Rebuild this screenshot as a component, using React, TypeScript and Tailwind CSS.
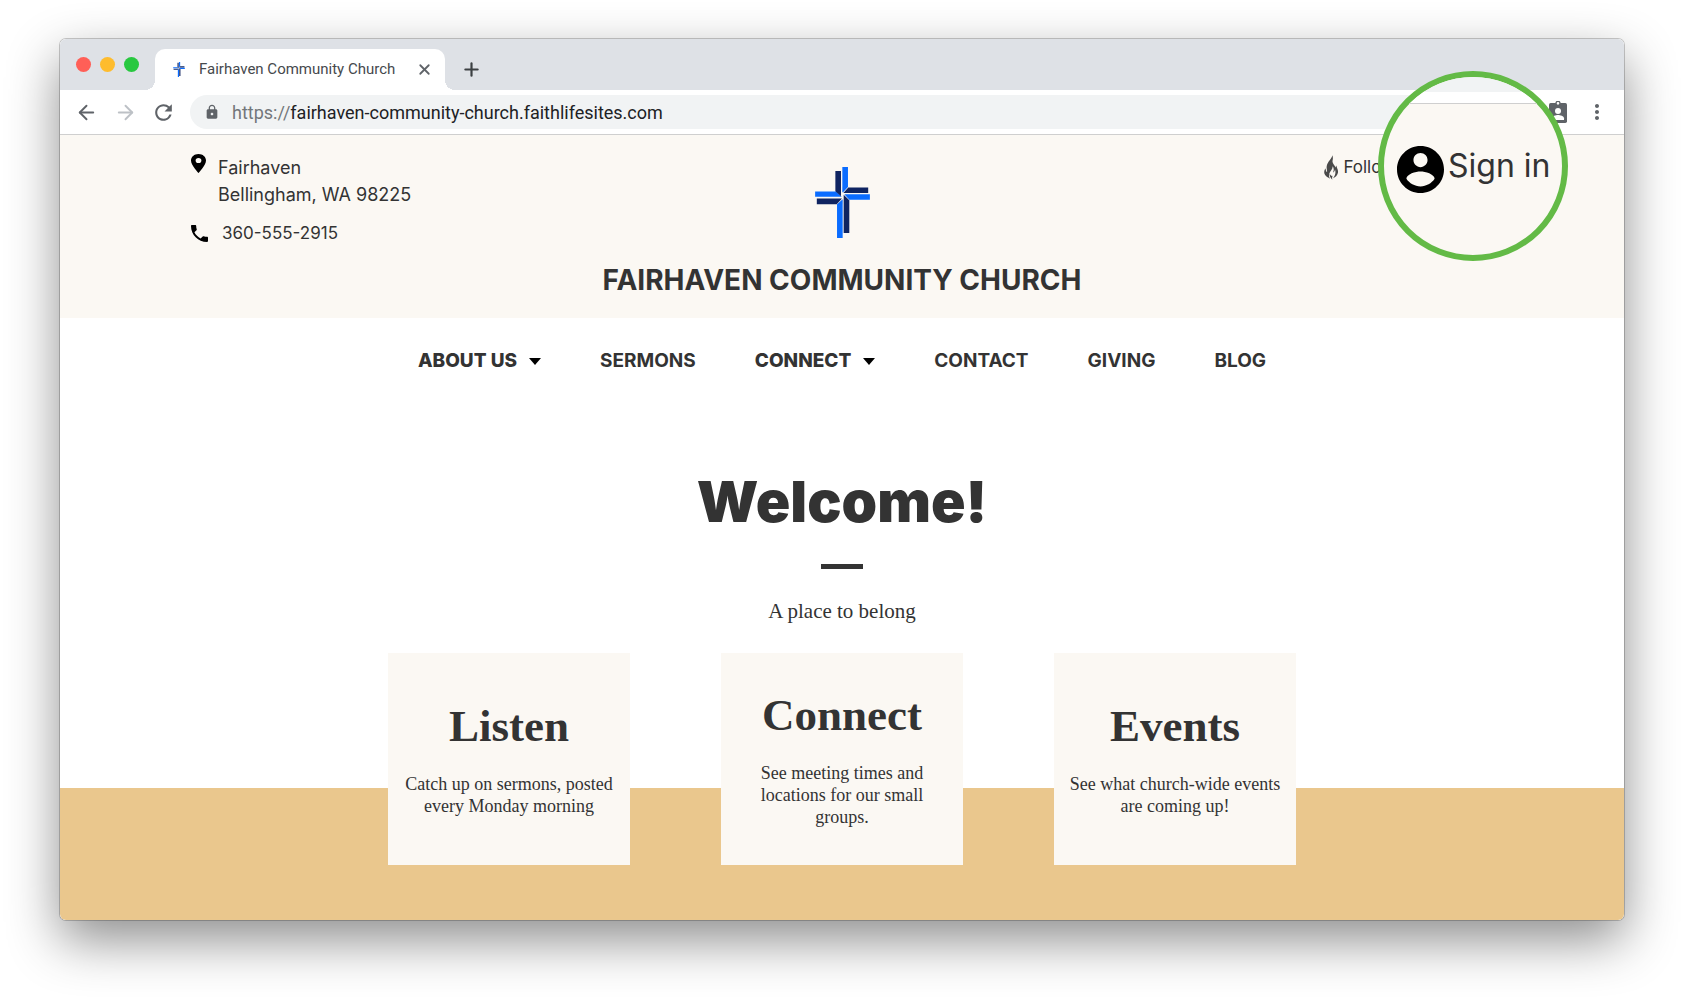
import { ArrowLeft, ArrowRight, Plus, X } from 'lucide-react';
import { MdLock, MdMoreVert, MdRefresh } from 'react-icons/md';

interface NavItem {
  name: string;
  href: string;
  hasMenu?: boolean;
}

const navItems: NavItem[] = [
  { name: 'ABOUT US', href: '#about', hasMenu: true },
  { name: 'SERMONS', href: '#sermons' },
  { name: 'CONNECT', href: '#connect', hasMenu: true },
  { name: 'CONTACT', href: '#contact' },
  { name: 'GIVING', href: '#giving' },
  { name: 'BLOG', href: '#blog' },
];

const cards = [
  { title: 'Listen', text: 'Catch up on sermons, posted every Monday morning' },
  { title: 'Connect', text: 'See meeting times and locations for our small groups.' },
  { title: 'Events', text: 'See what church-wide events are coming up!' },
];

function CrossLogo({ className }: { className: string }) {
  return (
    <svg viewBox="0 0 165 214" className={className} aria-hidden="true">
      <g fill="#0a6cff">
        <path d="M82 0h17v60L84 76h-2z" />
        <path d="M0 74h63l17 16H0z" />
        <path d="M66 112l17-15v117H66z" />
        <path d="M88 82h77v17h-62z" />
      </g>
      <g fill="#0f2461">
        <path d="M61 12h17v76L61 73z" />
        <path d="M100 62h60v16H85z" />
        <path d="M5 95h76l-16 17H5z" />
        <path d="M86 84l17 16v99H86z" />
      </g>
    </svg>
  );
}

function PinIcon() {
  return (
    <svg viewBox="5 2 14 20" className="h-[19px] w-[15px]" preserveAspectRatio="none" aria-hidden="true">
      <path d="M12 2C8 2 5 5 5 8.800c0 5 7 13.200 7 13.200s7-8.200 7-13.200C19 5 16 2 12 2zm0 9.500a2.700 2.700 0 110-5.400 2.700 2.700 0 010 5.400z" />
    </svg>
  );
}

function PhoneIcon() {
  return (
    <svg viewBox="3 3 18 18" className="size-[17px]" aria-hidden="true">
      <path d="M6.620 10.790c1.440 2.830 3.760 5.140 6.590 6.590l2.200-2.200c.27-.27.67-.36 1.020-.24 1.120.37 2.330.57 3.570.57.55 0 1 .45 1 1V20c0 .55-.45 1-1 1-9.390 0-17-7.610-17-17 0-.55.45-1 1-1h3.500c.55 0 1 .45 1 1 0 1.250.2 2.450.57 3.570.11.35.03.74-.25 1.020l-2.200 2.200z" />
    </svg>
  );
}

function FlameIcon() {
  return (
    <svg viewBox="0 0 42 74" className="h-[25px] w-[14px]" fill="#4a4a4a" aria-hidden="true">
      <path d="M25 0c-2 12-15 19-17 34-1 7 2 11 1 17-3-3-4-7-4-12C0 45-1 52 3 59c3 6 9 8 15 12-4-7-4-12-1-18 3-7 9-11 9-20 4 6 4 12 1 19 4-2 5-5 6-9 3 9 1 17-6 26 8-3 14-9 15-17 1-9-4-14-5-21-1 2-2 4-2 6-3-7-12-14-9-22 1-5 1-10-1-15z" />
      <path d="M17 55c-1 7 2 13 8 19-1-5-1-8 1-12-4 1-7-2-9-7z" />
    </svg>
  );
}

function AccountIcon() {
  return (
    <svg viewBox="2 2 20 20" className="size-[47px] shrink-0" aria-hidden="true">
      <path d="M12 2C6.480 2 2 6.480 2 12s4.480 10 10 10 10-4.480 10-10S17.520 2 12 2zm0 3c1.660 0 3 1.340 3 3s-1.340 3-3 3-3-1.340-3-3 1.340-3 3-3zm0 14.200c-2.500 0-4.710-1.280-6-3.220.030-1.990 4-3.080 6-3.080 1.990 0 5.970 1.090 6 3.080-1.290 1.940-3.500 3.220-6 3.220z" />
    </svg>
  );
}

function BadgeIcon() {
  return (
    <svg viewBox="0 0 54 66" className="h-[22px] w-[18px]" aria-hidden="true">
      <rect y="6" width="54" height="60" rx="5" fill="#5f6368" />
      <circle cx="27" cy="7" r="6" fill="#fff" stroke="#5f6368" strokeWidth="4" />
      <circle cx="27" cy="30" r="9" fill="#fff" />
      <path d="M9 57v-5c0-7 12-10 18-10s18 3 18 10v5z" fill="#fff" />
    </svg>
  );
}

function TabStrip() {
  return (
    <div className="flex h-[51px] items-end bg-[#dee1e6]">
      <div className="flex gap-[9px] self-center px-4">
        <span className="size-[15px] rounded-full bg-[#ff5f57]" />
        <span className="size-[15px] rounded-full bg-[#febc2e]" />
        <span className="size-[15px] rounded-full bg-[#28c840]" />
      </div>
      <div className="relative flex h-[41px] w-[290px] items-center rounded-t-[10px] bg-white pl-[18px] pr-3">
        {/* curved feet on both sides of the tab */}
        <span className="absolute -left-2.5 bottom-0 size-2.5 bg-[radial-gradient(circle_at_0_0,#dee1e6_10px,#fff_10px)]" />
        <span className="absolute -right-2.5 bottom-0 size-2.5 bg-[radial-gradient(circle_at_100%_0,#dee1e6_10px,#fff_10px)]" />
        <CrossLogo className="h-[15px] w-3" />
        <span className="ml-[14px] flex-1 whitespace-nowrap font-['Roboto',sans-serif] text-[15px] text-[#45494d]">
          Fairhaven Community Church
        </span>
        <button aria-label="Close tab" className="text-[#5f6368]">
          <X size={17} strokeWidth={2.5} />
        </button>
      </div>
      <button aria-label="New tab" className="mb-[10px] ml-4 text-[#3c4043]">
        <Plus size={21} strokeWidth={2.5} />
      </button>
    </div>
  );
}

function Toolbar() {
  return (
    <div className="flex h-[45px] items-center border-b border-[#cfcfcf] bg-white pl-[15px] pr-[15px]">
      <button aria-label="Back" className="text-[#5f6368]">
        <ArrowLeft size={23} />
      </button>
      <button aria-label="Forward" className="ml-4 text-[#bdc1c6]">
        <ArrowRight size={23} />
      </button>
      <button aria-label="Reload" className="ml-[14px] text-[#5f6368]">
        <MdRefresh size={25} />
      </button>
      <div className="ml-[14px] flex h-[34px] flex-1 items-center rounded-full bg-[#f1f3f4] pl-[14px]">
        <MdLock size={16} className="text-[#5f6368]" />
        <span className="ml-3 font-['Roboto',sans-serif] text-[18px] text-[#202124]">
          <span className="text-[#73777b]">https://</span>fairhaven-community-church.faithlifesites.com
        </span>
      </div>
      <button aria-label="Profile" className="ml-10">
        <BadgeIcon />
      </button>
      <button aria-label="More options" className="ml-[18px] text-[#5f6368]">
        <MdMoreVert size={24} />
      </button>
    </div>
  );
}

function SiteHeader() {
  return (
    <header className="grid h-[183px] grid-cols-[1fr_auto_1fr] bg-[#fbf8f3] px-[131px] text-[17px] leading-[27px] text-[#333]">
      <address className="pt-[19px] not-italic">
        <div className="flex gap-3">
          <PinIcon />
          <p className="text-[18px]">
            Fairhaven
            <br />
            Bellingham, WA 98225
          </p>
        </div>
        <a href="tel:3605552915" className="mt-3 flex items-center gap-[14px]">
          <PhoneIcon />
          360-555-2915
        </a>
      </address>
      <div className="flex flex-col items-center pt-8">
        <CrossLogo className="h-[71px] w-[55px]" />
        <h1 className="mt-6 whitespace-nowrap text-[28px] font-bold leading-9">FAIRHAVEN COMMUNITY CHURCH</h1>
      </div>
      <div className="flex items-start justify-end pr-[98px] pt-[19px]">
        <a href="#follow" className="flex items-center gap-[5px]">
          <FlameIcon />
          Follow
        </a>
      </div>
    </header>
  );
}

function SiteNav() {
  return (
    <nav className="flex h-[86px] items-center justify-center gap-[59px]">
      {navItems.map((item) => (
        <a
          key={item.name}
          href={item.href}
          className={`flex items-center gap-3 text-[19px] text-[#333] ${item.hasMenu ? 'font-extrabold' : 'font-bold'}`}
        >
          {item.name}
          {item.hasMenu && (
            <svg viewBox="0 0 12 7" className="h-[7px] w-3" aria-hidden="true">
              <path d="M0 0h12L6 7z" />
            </svg>
          )}
        </a>
      ))}
    </nav>
  );
}

function SignInLens() {
  return (
    <div className="absolute right-14 top-8 flex size-[190px] flex-col overflow-hidden rounded-full border-6 border-[#63ba46] bg-[#fbf8f3]">
      <div className="h-[15px] bg-[#f1f3f4]" />
      <div className="h-3 border-b border-[#cfcfcf] bg-white" />
      <a href="#signin" className="mt-[42px] flex items-start gap-1 whitespace-nowrap pl-[13px] text-[32px] leading-[39px] text-[#333]">
        <AccountIcon />
        Sign in
      </a>
    </div>
  );
}

export default function App() {
  return (
    <div className="min-h-screen bg-white pb-[82px] pl-[60px] pr-[59px] pt-[39px] font-['Inter',sans-serif]">
      <div className="relative rounded-md shadow-[0_0_0_1px_rgba(0,0,0,0.2),0_20px_52px_rgba(0,0,0,0.45)]">
        <div className="overflow-hidden rounded-md bg-white">
          <TabStrip />
          <Toolbar />
          <SiteHeader />
          <SiteNav />
          <section className="flex flex-col items-center pb-[163px] pt-[62px] text-[#333]">
            <h2 className="text-[57px] font-black leading-[72px]">Welcome!</h2>
            <div className="mt-[26px] h-[5px] w-[42px] bg-[#333]" />
            <p className="mt-7 font-['Liberation_Serif',serif] text-[21px] leading-7">A place to belong</p>
          </section>
          <section className="flex justify-center gap-[91px] bg-[#eac78d] pb-[55px] text-center font-['Liberation_Serif',serif] text-[#333]">
            {cards.map((card) => (
              <article key={card.title} className="-mt-[135px] flex h-[212px] w-[242px] flex-col justify-center bg-[#fbf8f3] px-3.5">
                <h3 className="text-[45px] font-bold leading-[50px]">{card.title}</h3>
                <p className="mt-[22px] text-[18px] leading-[22px]">{card.text}</p>
              </article>
            ))}
          </section>
        </div>
        <SignInLens />
      </div>
    </div>
  );
}
